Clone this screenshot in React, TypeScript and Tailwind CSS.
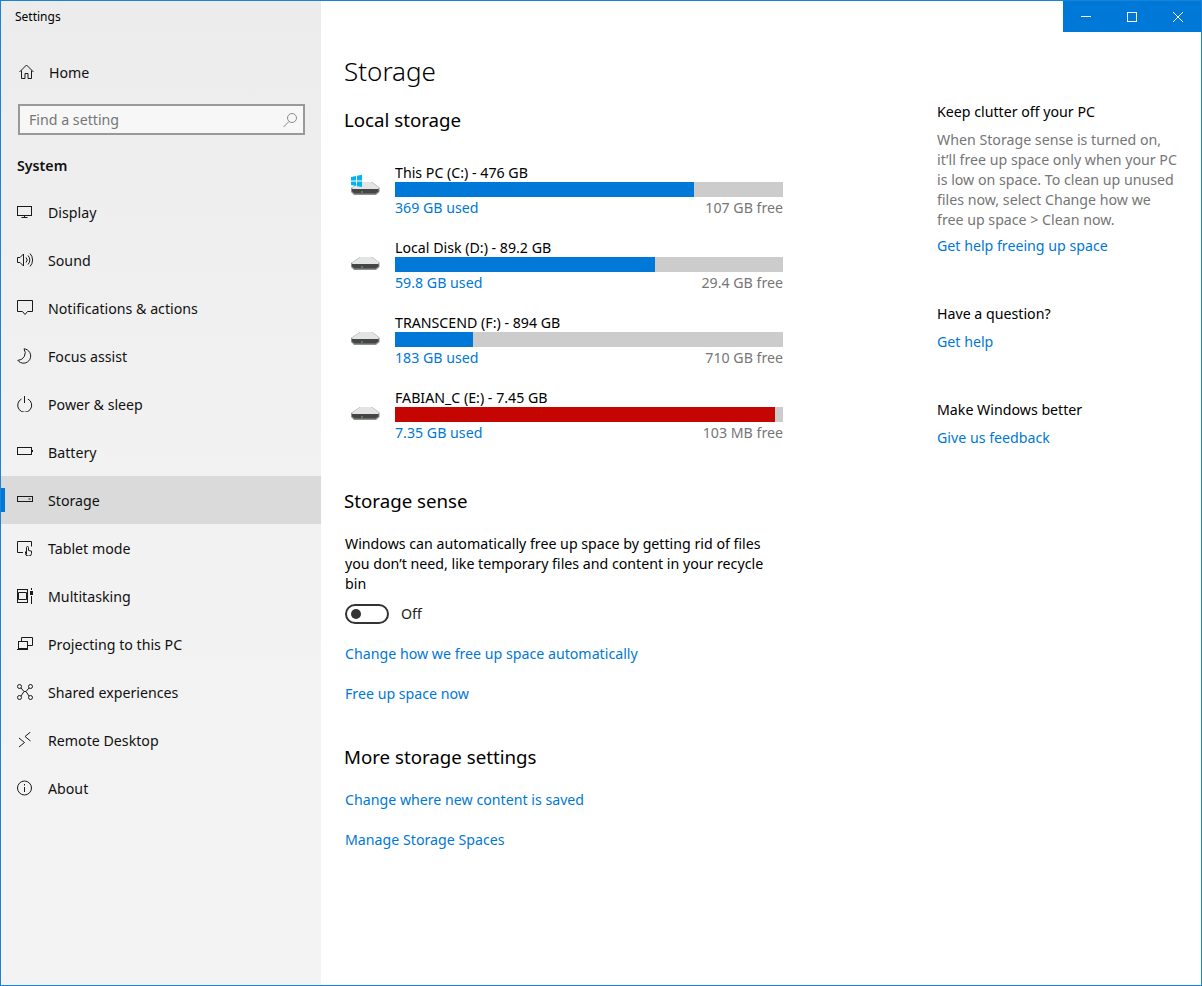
// Windows 10 Settings > System > Storage
import type { ReactNode } from 'react';

const FONT = 'font-["Noto_Sans","Open_Sans",sans-serif]';

function NavIcon({ children }: { children: ReactNode }) {
  return (
    <svg width="16" height="16" viewBox="0 0 16 16" fill="none" stroke="#1a1a1a" strokeWidth="1" className="shrink-0">
      {children}
    </svg>
  );
}

const NAV_ITEMS: { label: string; icon: ReactNode }[] = [
  { label: 'Display', icon: <><rect x="0.500" y="2.500" width="14" height="9" /><path d="M7.500 11.500v2M4.500 13.500h6" /></> },
  { label: 'Sound', icon: <><path d="M0.500 5.500h2.500l3.500-3.500v12l-3.500-3.500H0.500z" /><path d="M9 5.500a3.500 3.500 0 0 1 0 5M11 3.500a6.500 6.500 0 0 1 0 9M13 1.500a9.500 9.500 0 0 1 0 13" /></> },
  { label: 'Notifications & actions', icon: <path d="M0.500 0.500h15v11h-5l-2.500 3-2.500-3h-5z" /> },
  { label: 'Focus assist', icon: <path d="M7 0.800a7.200 7.200 0 1 1-6.200 11.600 7.500 7.500 0 0 0 6.200-11.600z" /> },
  { label: 'Power & sleep', icon: <><path d="M4.500 3a7 7 0 1 0 6.400 0" /><path d="M7.500 0v7" /></> },
  { label: 'Battery', icon: <><rect x="0.500" y="3.500" width="14" height="7" /><path d="M15.500 6v2" /></> },
  { label: 'Storage', icon: <><rect x="0.500" y="4.500" width="15" height="5" /><path d="M11.500 7h2" /></> },
  { label: 'Tablet mode', icon: <><path d="M6 12.500H0.500v-11h14v5" /><path d="M9.500 14.500V7.500a1 1 0 0 1 2 0v3l3 .6v2.400a2.500 2.500 0 0 1-2.500 2.500h-1a2.500 2.500 0 0 1-2.500-2.500v-2" /></> },
  { label: 'Multitasking', icon: <><path d="M0 1.500h11M0 14.500h11M1.500 4.500h8v7h-8z" /><path d="M0.500 1.500v13M10.500 1.500v13" /><path d="M14.500 0v2M14.500 8v8" /><rect x="13" y="3" width="3" height="4" fill="#1a1a1a" stroke="none" /></> },
  { label: 'Projecting to this PC', icon: <><path d="M4.500 5.500V1.500h11v8h-5" /><rect x="1.500" y="5.500" width="9" height="7" /><path d="M0 13.500h11" /></> },
  { label: 'Shared experiences', icon: <><circle cx="2.500" cy="2.500" r="2" /><circle cx="13.500" cy="2.500" r="2" /><circle cx="2.500" cy="13.500" r="2" /><circle cx="13.500" cy="13.500" r="2" /><path d="M4 4l3 3.500-3 4.500M12 4l-3 3.500 3 4.500M7 7.500h2" /></> },
  { label: 'Remote Desktop', icon: <><path d="M2 6l5.500 4.500L2 15" /><path d="M13.500 0L8 4.500 13.500 9" /></> },
  { label: 'About', icon: <><circle cx="7.500" cy="8" r="7" /><path d="M7.500 7v5" /><path d="M7.500 4v1.500" /></> },
];

const DRIVES = [
  { name: 'This PC (C:) - 476 GB', used: '369 GB used', free: '107 GB free', fill: 299, red: false, system: true },
  { name: 'Local Disk (D:) - 89.2 GB', used: '59.8 GB used', free: '29.4 GB free', fill: 260, red: false, system: false },
  { name: 'TRANSCEND (F:) - 894 GB', used: '183 GB used', free: '710 GB free', fill: 78, red: false, system: false },
  { name: 'FABIAN_C (E:) - 7.45 GB', used: '7.35 GB used', free: '103 MB free', fill: 380, red: true, system: false },
];

function DriveIcon({ system }: { system: boolean }) {
  return (
    <svg width="32" height="32" viewBox="0 0 32 32" className="shrink-0">
      <path d="M0 14 L9 8 H21 L28.500 13.500 V18 L25 21 H3 L0 18 Z" fill="#8f8f8f" />
      <path d="M0.500 14 L9.500 8 H20.500 L28 13.500 L27 15 H2 Z" fill="#e4e4e4" />
      <path d="M1 15 H27.500 V17.500 L24.500 19.500 H3.500 L1 17.500 Z" fill="#454545" />
      <path d="M10 18 H12" stroke="#52c25a" strokeWidth="1" />
      {system && (
        <g fill="#00b4f1">
          <path d="M0 3 L5 2 V6.500 H0 Z" />
          <path d="M6 1.800 L11 0.800 V6.500 H6 Z" />
          <path d="M0 7.500 H5 V12 L0 11 Z" />
          <path d="M6 7.500 H11 V13 L6 12.200 Z" />
        </g>
      )}
    </svg>
  );
}

function Sidebar() {
  return (
    <aside className="w-[320px] shrink-0 bg-linear-to-b from-[#ececec] via-[#f2f2f2] to-[#f3f3f3] flex flex-col">
      <div className="h-[31px] pl-[14px] flex items-center text-[12px] text-black">Settings</div>
      <div className="h-[16px]" />
      <div className="h-[48px] pl-[18px] flex items-center gap-[14px] text-[14.200px] text-[#111]">
        <NavIcon>
          <path d="M0.500 8L7.500 1l7 7M2.500 6.500V14.500h3.500v-5h3v5h3.500V6.500" />
        </NavIcon>
        <span className="pt-[2px]">Home</span>
      </div>
      <div className="ml-[17px] mr-[16px] mt-[8px] h-[31px] border-2 border-[#999] bg-[#f7f7f7] flex items-center justify-between pl-[9px] pr-[5px] text-[14.200px] text-[#767676]">
        <span>Find a setting</span>
        <svg width="16" height="16" viewBox="0 0 16 16" fill="none" stroke="#8a8a8a" strokeWidth="1">
          <circle cx="10" cy="6" r="4.500" />
          <path d="M7 9.500L1.500 15" />
        </svg>
      </div>
      <div className="pl-[16px] h-[53px] pt-[8px] flex items-center font-semibold text-[14.200px] text-[#111]">System</div>
      {NAV_ITEMS.map((item) => (
        <div
          key={item.label}
          className={`relative h-[48px] pl-[16px] flex items-center gap-[15px] text-[14.200px] text-[#111] ${item.label === 'Storage' ? 'bg-[#dadada]' : ''}`}
        >
          {item.label === 'Storage' && <span className="absolute left-0 top-[12px] h-[24px] w-[4px] bg-[#0078d7]" />}
          <NavIcon>{item.icon}</NavIcon>
          <span className="pt-[2px]">{item.label}</span>
        </div>
      ))}
    </aside>
  );
}

function CaptionButtons() {
  return (
    <div className="ml-auto w-[138px] h-[31px] bg-[#0078d7] flex text-white">
      <div className="w-[46px] flex items-center justify-center">
        <svg width="10" height="10" viewBox="0 0 10 10" stroke="#fff"><path d="M0 4.500h10" /></svg>
      </div>
      <div className="w-[46px] flex items-center justify-center">
        <svg width="10" height="10" viewBox="0 0 10 10" fill="none" stroke="#fff"><rect x="0.500" y="0.500" width="9" height="9" /></svg>
      </div>
      <div className="w-[46px] flex items-center justify-center">
        <svg width="10" height="10" viewBox="0 0 10 10" stroke="#fff"><path d="M0 0l10 10M10 0L0 10" /></svg>
      </div>
    </div>
  );
}

function DriveRow({ drive }: { drive: (typeof DRIVES)[number] }) {
  return (
    <div className="h-[75px] flex items-center gap-[12px]">
      <DriveIcon system={drive.system} />
      <div className="w-[388px]">
        <div className="h-[20px] pt-[1px] text-[14.200px] leading-[20px] text-black">{drive.name}</div>
        <div className="h-[15px] bg-[#cccccc]">
          <div className={`h-full ${drive.red ? 'bg-[#c50500]' : 'bg-[#0078d7]'}`} style={{ width: drive.fill }} />
        </div>
        <div className="h-[21px] pt-[2px] flex justify-between items-center text-[14.200px]">
          <span className="text-[#0078d7]">{drive.used}</span>
          <span className="text-[#767676]">{drive.free}</span>
        </div>
      </div>
    </div>
  );
}

function MainColumn() {
  return (
    <div className="w-[560px] pl-[23px]">
      <h1 className="text-[26px] leading-[40px] mt-[19px] font-light text-black">Storage</h1>
      <h2 className="text-[18.700px] leading-[28px] mt-[15px] text-black">Local storage</h2>
      <div className="mt-[18px] pl-[7px]">
        {DRIVES.map((drive) => <DriveRow key={drive.name} drive={drive} />)}
      </div>
      <h2 className="text-[18.700px] leading-[28px] mt-[35px] text-black">Storage sense</h2>
      <div className="pl-[1px]">
        <p className="w-[425px] mt-[19px] text-[14.200px] leading-[20px] text-black">
          Windows can automatically free up space by getting rid of files you don’t need, like temporary files and content in your recycle bin
        </p>
        <div className="mt-[10px] h-[20px] flex items-center gap-[12px] text-[14.200px] text-[#222]">
          <span className="w-[44px] h-[20px] rounded-full border-2 border-[#333] flex items-center pl-[4px]">
            <span className="w-[10px] h-[10px] rounded-full bg-[#333]" />
          </span>
          Off
        </div>
        <div className="mt-[20px] text-[14.200px] leading-[20px] text-[#0078d7]">Change how we free up space automatically</div>
        <div className="mt-[20px] text-[14.200px] leading-[20px] text-[#0078d7]">Free up space now</div>
      </div>
      <h2 className="text-[18.700px] leading-[28px] mt-[39px] text-black">More storage settings</h2>
      <div className="pl-[1px]">
        <div className="mt-[19px] text-[14.200px] leading-[20px] text-[#0078d7]">Change where new content is saved</div>
        <div className="mt-[20px] text-[14.200px] leading-[20px] text-[#0078d7]">Manage Storage Spaces</div>
      </div>
    </div>
  );
}

function HelpColumn() {
  return (
    <div className="w-[242px] ml-[56px] pt-[30px] text-[14.200px] leading-[20px]">
      <div className="mt-[40px] text-black">Keep clutter off your PC</div>
      <p className="mt-[8px] text-[#767676]">
        When Storage sense is turned on, it’ll free up space only when your PC is low on space. To clean up unused files now, select Change how we free up space &gt; Clean now.
      </p>
      <div className="mt-[6px] text-[#0078d7]">Get help freeing up space</div>
      <div className="mt-[48px] text-black">Have a question?</div>
      <div className="mt-[8px] text-[#0078d7]">Get help</div>
      <div className="mt-[48px] text-black">Make Windows better</div>
      <div className="mt-[8px] text-[#0078d7]">Give us feedback</div>
    </div>
  );
}

export default function App() {
  return (
    <div className={`${FONT} w-[1202px] h-[986px] border border-[#1883d7] bg-white flex overflow-hidden`}>
      <Sidebar />
      <div className="flex-1 flex flex-col">
        <CaptionButtons />
        <div className="flex">
          <MainColumn />
          <HelpColumn />
        </div>
      </div>
    </div>
  );
}
